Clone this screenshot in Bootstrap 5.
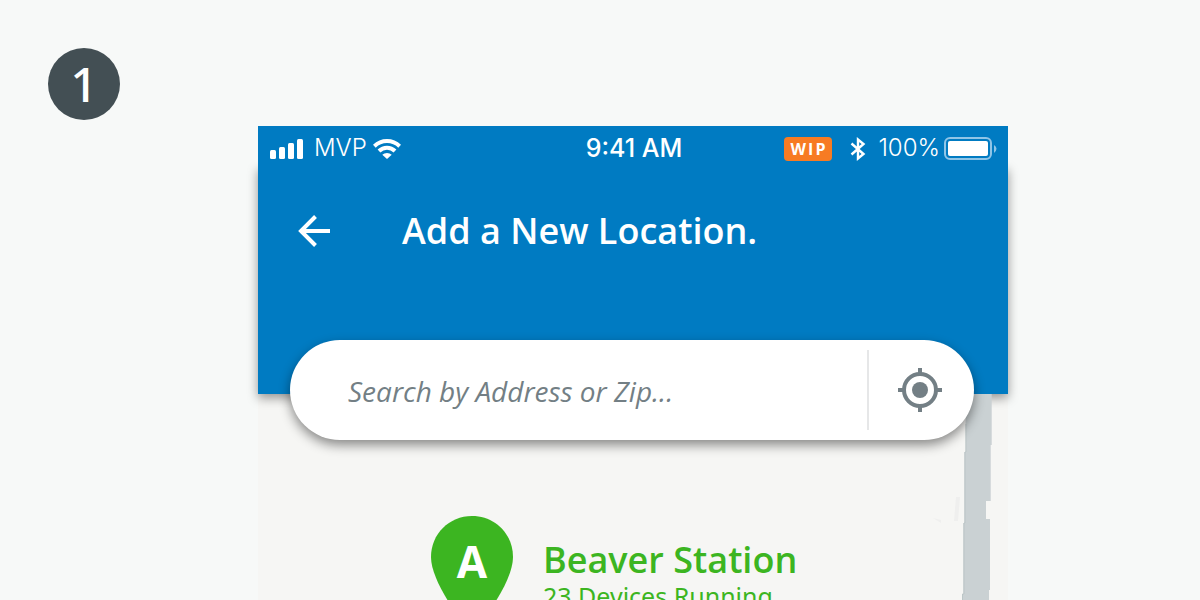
<!DOCTYPE html>
<html lang="en">
<head>
<meta charset="utf-8">
<meta name="viewport" content="width=device-width, initial-scale=1">
<title>Add a New Location</title>
<link rel="stylesheet" href="https://cdn.jsdelivr.net/npm/bootstrap@5.3.0/dist/css/bootstrap.min.css">
<style>
  body { background: #f7f9f8; font-family: "Open Sans", sans-serif; }
  svg { display: block; flex: none; }
  .page { padding: 48px 192px 0 48px; gap: 138px; }
  .step { width: 72px; height: 72px; background: #434f54; font-family: "Noto Sans", sans-serif; font-size: 48px; font-weight: 500; line-height: 72px; }
  .phone { margin-top: 78px; min-width: 0; background: #f6f6f4; }
  .blue { background: #007bc2; }
  .status { height: 40px; padding: 6px 10px 0 12px; font: 300 24px/32px Inter, sans-serif; z-index: 1; }
  .carrier, .clock, .charge { padding-bottom: 2px; }
  .carrier { margin: 0 6px 0 10px; }
  .clock { font-size: 25px; font-weight: 500; }
  .wip { background: #f77b23; font: 700 16px/24px "Open Sans", sans-serif; letter-spacing: 2px; border-radius: 4px; padding: 0 5px 0 7px; }
  .bluetooth { margin: 0 10px 0 16px; }
  .app-bar { height: 228px; padding: 36px 40px 0; box-shadow: 0 4px 10px rgba(0,0,0,.4); }
  .app-bar h1 { font-size: 36px; line-height: 58px; font-weight: 600; }
  .back { width: 32px; height: 58px; margin-right: 72px; }
  .search { height: 100px; margin: -54px 34px 0 32px; padding: 10px 0; border-radius: 50px; box-shadow: 0 5px 12px rgba(0,0,0,.45); }
  .search input { font-size: 28px; font-style: italic; padding: 2px 0 0 58px; color: #737f85; min-width: 0; outline: 0; }
  .search input::placeholder { color: #737f85; opacity: 1; }
  .locate { width: 107px; border-left: 2px solid #e6e7e8 !important; padding-right: 3px; }
  .road { top: 268px; right: 0; }
  .station { margin-top: 76px; padding-left: 173px; gap: 30px; }
  .pin-label { fill: #fff; font-size: 44px; font-weight: 700; }
  .green { color: #3cb521; }
  .station h2 { font-size: 36px; line-height: 40px; font-weight: 600; }
  .station p { font-family: "Noto Sans", sans-serif; font-size: 25px; line-height: 32px; }
</style>
</head>
<body class="vh-100 overflow-hidden">
<div class="page d-flex align-items-start">
  <div class="step rounded-circle text-white text-center flex-shrink-0">1</div>
  <main class="phone flex-grow-1 position-relative">
    <svg class="road position-absolute" width="80" height="206" viewBox="0 0 80 206" aria-hidden="true">
      <path d="M38.500 0H63.700V51H62.700V107H58V125H62V196H61V206H34V200H35.300V129H36.300V58H37.500V30Z" fill="#cad1d3"/>
      <path d="M38 30V58H37V129H36V200H34.500V206" fill="none" stroke="#bcc6c7"/>
      <path d="M28 103h4l-2 24h-4zM5 124l8 2v3z" fill="#efefee"/>
    </svg>
    <div class="status blue text-white d-flex align-items-center position-relative">
      <div class="col d-flex align-items-center">
        <svg width="34" height="20" viewBox="0 0 34 20" fill="#fff" aria-hidden="true"><rect y="11" width="6" height="9" rx="1.500"/><rect x="9" y="8" width="6" height="12" rx="1.500"/><rect x="18" y="4" width="6" height="16" rx="1.500"/><rect x="27" width="6" height="20" rx="1.500"/></svg>
        <span class="carrier">MVP</span>
        <svg width="28" height="20" viewBox="0 0 28 20" aria-hidden="true"><g fill="none" stroke="#fff" stroke-width="4"><path d="M1.300 7.200a18.200 18.200 0 0 1 25.400 0"/><path d="M6 12a11.500 11.500 0 0 1 16 0"/></g><path d="M9.300 15.800a6.800 6.800 0 0 1 9.400 0L14 20Z" fill="#fff"/></svg>
      </div>
      <span class="clock">9:41 AM</span>
      <div class="col d-flex align-items-center justify-content-end">
        <span class="wip">WIP</span>
        <svg class="bluetooth" width="20" height="24" viewBox="0 0 20 24" fill="none" stroke="#fff" stroke-width="2.400" aria-hidden="true"><path d="M3.500 6.500 15.500 17 10 21.500V2.500l5.500 4.500L3.500 17.500"/></svg>
        <span class="charge me-1">100%</span>
        <svg width="54" height="24" viewBox="0 0 54 24" aria-hidden="true"><rect x="1" y="1" width="46" height="21" rx="5" fill="none" stroke="#8fc5e7" stroke-width="2"/><rect x="4" y="4" width="40" height="15" rx="2" fill="#fff"/><path d="M50 8q5 3.500 0 8Z" fill="#8fc5e7"/></svg>
      </div>
    </div>
    <header class="app-bar blue text-white d-flex align-items-start">
      <button type="button" class="back btn p-0 border-0 text-white" aria-label="Back">
        <svg width="32" height="32" viewBox="0 0 32 32" fill="none" stroke="currentColor" stroke-width="4" aria-hidden="true"><path d="M32 16H3M17.500 1.500 3 16l14.500 14.500"/></svg>
      </button>
      <h1 class="m-0">Add a New Location.</h1>
    </header>
    <form class="search bg-white d-flex position-relative">
      <input class="flex-grow-1 border-0 bg-transparent" type="text" placeholder="Search by Address or Zip..." aria-label="Search by address or zip">
      <button type="button" class="locate btn rounded-0 border-0 py-0 ps-0 d-flex align-items-center justify-content-center" aria-label="Use my location">
        <svg width="44" height="44" viewBox="0 0 44 44" aria-hidden="true"><g fill="none" stroke="#737f85" stroke-width="4"><circle cx="22" cy="22" r="16"/><path d="M22 0v6M22 38v6M0 22h6M38 22h6"/></g><circle cx="22" cy="22" r="8" fill="#737f85"/></svg>
      </button>
    </form>
    <section class="station d-flex green">
      <svg width="82" height="118" viewBox="0 0 82 118" role="img" aria-label="Location A"><path d="M41 0C18 0 0 18 0 41C0 70 41 118 41 118S82 70 82 41C82 18 64 0 41 0Z" fill="#3cb521"/><text class="pin-label" x="41" y="62" text-anchor="middle">A</text></svg>
      <div class="pt-4">
        <h2 class="m-0">Beaver Station</h2>
        <p class="m-0">23 Devices Running</p>
      </div>
    </section>
  </main>
</div>
<script src="https://cdn.jsdelivr.net/npm/bootstrap@5.3.0/dist/js/bootstrap.bundle.min.js"></script>
</body>
</html>
